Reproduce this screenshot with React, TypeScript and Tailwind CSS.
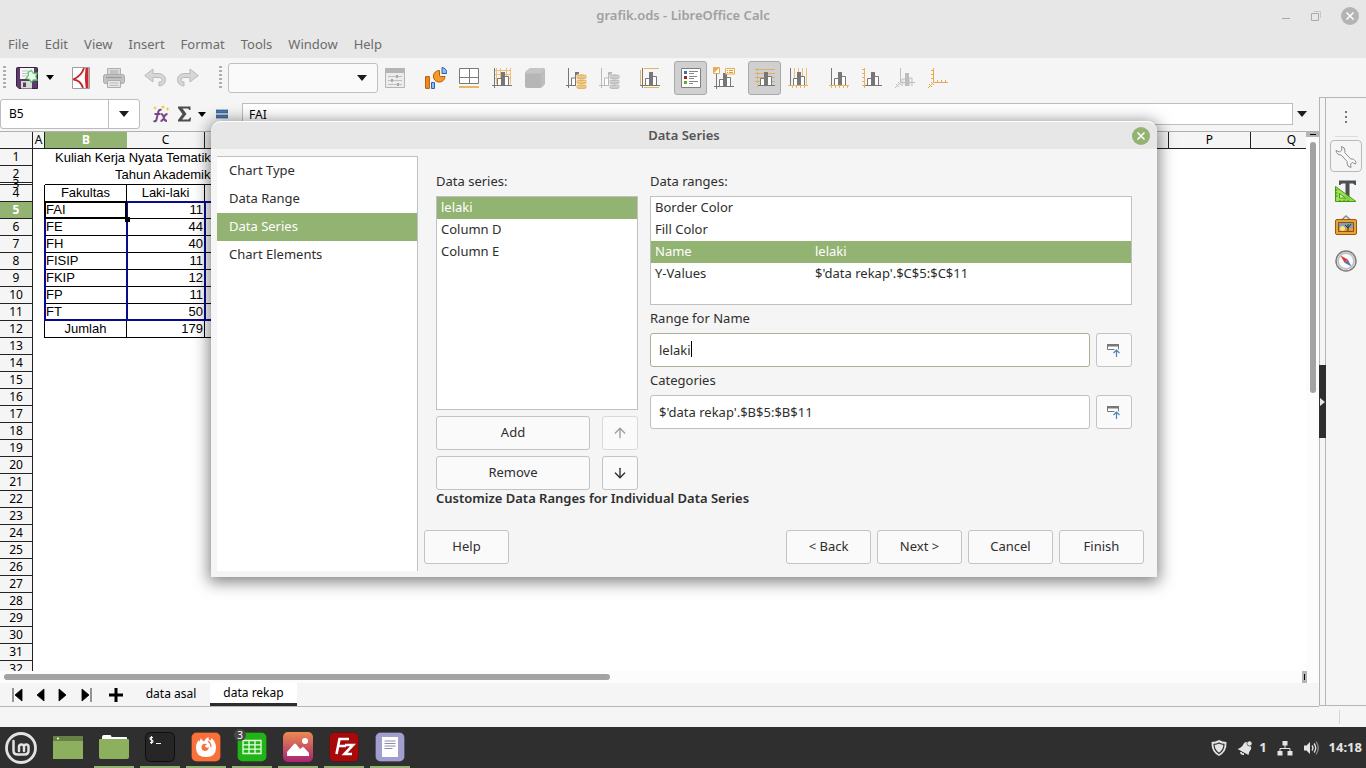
import { ReactNode } from 'react';
import { clsx } from 'clsx';
import { ArrowDown, ArrowUp } from 'lucide-react';

const uiFont = "font-['Noto_Sans',sans-serif]";

const menus = ['File', 'Edit', 'View', 'Insert', 'Format', 'Tools', 'Window', 'Help'];

const faculties = [
  { name: 'FAI', male: 11 },
  { name: 'FE', male: 44 },
  { name: 'FH', male: 40 },
  { name: 'FISIP', male: 11 },
  { name: 'FKIP', male: 12 },
  { name: 'FP', male: 11 },
  { name: 'FT', male: 50 },
];

const farColumns = ['D', 'E', 'F', 'G', 'H', 'I', 'J', 'K', 'L', 'M', 'N', 'O', 'P', 'Q'];

const steps = ['Chart Type', 'Data Range', 'Data Series', 'Chart Elements'];

const series = ['lelaki', 'Column D', 'Column E'];

const ranges = [
  { label: 'Border Color', value: '' },
  { label: 'Fill Color', value: '' },
  { label: 'Name', value: 'lelaki' },
  { label: 'Y-Values', value: "$'data rekap'.$C$5:$C$11" },
];

/* ---------- icons ---------- */

function Svg({ size = 20, className, children }: { size?: number; className?: string; children: ReactNode }) {
  return (
    <svg width={size} height={size} viewBox={`0 0 ${size} ${size}`} fill="none" className={className} aria-hidden="true">
      {children}
    </svg>
  );
}

function Caret({ className }: { className?: string }) {
  return (
    <svg width="10" height="6" viewBox="0 0 10 6" className={className} aria-hidden="true">
      <path d="M0 0h10L5 6z" fill="#1c1c1c" />
    </svg>
  );
}

function SmallCaret() {
  return (
    <svg width="8" height="5" viewBox="0 0 8 5" aria-hidden="true">
      <path d="M0 0h8L4 5z" fill="#000" />
    </svg>
  );
}

function Bars({ color = '#777', axis = true }: { color?: string; axis?: boolean }) {
  return (
    <>
      <path d="M5.500 17v-6.500h4V17" fill="#fff" stroke={color} />
      <path d="M12.500 17V8.500h4V17" fill="#fff" stroke={color} />
      <path d="M9 4h4v13H9z" fill={color} />
      {axis && <path d="M2.500 0v20M0 17.500h20" stroke={color} />}
    </>
  );
}

function SaveIcon() {
  return (
    <Svg size={22}>
      <path d="M.500 1.500q0-1 1-1h19q1 0 1 1v20H3l-2.500-2.500z" fill="#5d3a6b" stroke="#3c1f48" />
      <path d="M4 1h14v11H4z" fill="#f5f5f5" />
      <path d="M6 4h10M6 6.500h10M6 9h8" stroke="#c4c4c4" />
      <path d="M5 14h11v7.500H5z" fill="#d9d9d9" />
      <path d="M7 15.500h3v4.500H7z" fill="#4b4b4b" />
      <path d="m15.500 3.500 2 3 3.500-.2-1.200 3.200L21 13l-3.600-.2-2.200 2.400-1.700-3-3.400-.8 2.200-2.600-.2-3.400z" fill="#f2fff2" stroke="#55cf6a" strokeWidth="1.300" />
    </Svg>
  );
}

function PdfIcon() {
  return (
    <Svg size={22}>
      <path d="M2.500.500h17v21h-17z" fill="#fff" stroke="#9d9d9d" />
      <path d="M14 1C12.500 6 9 10 3 12.500M3.500 12.500C8 13 11.500 16 13 21" stroke="#c1272d" strokeWidth="1.800" />
      <path d="M15.500 1h3v20h-2.800q-1.700-10-.2-20z" fill="#c8282e" />
    </Svg>
  );
}

function PrintIcon() {
  return (
    <Svg size={22}>
      <path d="M4.500 1.500h13v7h-13z" fill="#dadada" stroke="#b0b0b0" />
      <path d="M7 4h8M7 6h8" stroke="#aaa" />
      <rect x=".5" y="7.500" width="21" height="9" rx="2" fill="#c3c3c3" stroke="#a9a9a9" />
      <path d="M3 10.500h16" stroke="#9c9c9c" strokeWidth="1.500" />
      <path d="M4.500 13.500h13v7h-13z" fill="#e6e6e6" stroke="#adadad" />
      <path d="M6.500 16h9M6.500 18.500h9" stroke="#bcbcbc" />
    </Svg>
  );
}

function UndoIcon({ flip }: { flip?: boolean }) {
  return (
    <Svg size={22} className={clsx(flip && '-scale-x-100')}>
      <path d="M9 2v4.500h5c4.500 0 7.500 2.500 7.500 6s-2.500 6-6.500 6.500v-4c1.800 0 3-.8 3-2.200 0-1.600-1.500-2.300-4-2.300H9V15L.700 8.500z" fill="#d6d6d6" stroke="#b9b9b9" />
    </Svg>
  );
}

function FormatIcon() {
  return (
    <Svg>
      <path d="M.500.500h19v19H.500z" fill="#ececec" stroke="#b5b5b5" />
      <path d="M1 1h18v4H1z" fill="#b5b5b5" />
      <path d="M3 8.500h14M3 12.500h14M3 16.500h14" stroke="#c0c0c0" />
      <path d="M11 7h2v3h-2zM6 11h2v3H6zM12 15h2v3h-2z" fill="#a9a9a9" />
    </Svg>
  );
}

function ChartTypeIcon() {
  return (
    <Svg size={22}>
      <path d="M.600 9.600h3.800v11.800H.600z" fill="#f08c1e" stroke="#b85c00" />
      <path d="M6.500 15.500h3v6h-3z" fill="#8fbdf0" stroke="#2b62ab" />
      <path d="M14.500 3.500A5.800 5.800 0 1 0 20 9.500h-4.500q-1 0-1-1z" fill="#f39a2e" stroke="#b85c00" />
      <path d="M17 .500v6h4.800C22 3 20 .800 17 .500z" fill="#8fbdf0" stroke="#2b62ab" />
    </Svg>
  );
}

function AreaIcon() {
  return (
    <Svg>
      <path d="M.500.500h19v15H.500zM10.500.500v15M.500 9.500h19" fill="#fff" stroke="#7a7a7a" />
      <path d="M0 19h20" stroke="#e8b75f" strokeWidth="2" />
    </Svg>
  );
}

function WallIcon() {
  return (
    <Svg>
      <path d="M3 2.500h16M3 6.500h16M3 10.500h16M4.500 0v16M8.500 0v16M14.500 0v16M18.500 0v16" stroke="#ecc078" />
      <Bars />
    </Svg>
  );
}

function CubeIcon() {
  return (
    <Svg>
      <path d="M0 6q0-2 1.500-3.200L4 1q1-1 2.500-1H18q2 0 2 2v12.500q0 1.500-1 2.500l-1.500 1.500Q16 20 14.500 20H2q-2 0-2-2z" fill="#b6b6b6" />
      <path d="M0 6q0-2 1.500-3.200L4 1q1-1 2.500-1H18q1.500 0 2 1.500L16 5.500H0z" fill="#c6c6c6" />
      <path d="M16 5.500 20 1.500v13q0 1.500-1 2.500l-3 2.800z" fill="#bdbdbd" />
    </Svg>
  );
}

function DataIcon({ muted }: { muted?: boolean }) {
  const bar = muted ? '#b9b9b9' : '#777';
  const disc = muted ? '#bdbdbd' : '#e6b45c';
  return (
    <Svg size={22}>
      <path d="M3.500 1v20M1 18.500h10" stroke={bar} />
      <path d="M6.500 18v-7h4v7" fill="#fff" stroke={bar} />
      <path d="M10 5h4v3h-3v10h-1z" fill={bar} />
      {[17, 12, 7].map((y) => (
        <g key={y}>
          <path d={`M11.500 ${y + 1.5}v2q0 1.500 5 1.500t5-1.500v-2z`} fill={disc} />
          <ellipse cx="16.500" cy={y + 1.5} rx="5" ry="1.500" fill={disc} stroke="#f5f5f5" strokeWidth=".6" />
        </g>
      ))}
    </Svg>
  );
}

function TitlesIcon() {
  return (
    <Svg>
      <path d="M.500 2v15M4 .500h15M4 19.500h15" stroke="#e6b45c" />
      <Bars />
    </Svg>
  );
}

function LegendIcon() {
  return (
    <Svg>
      <path d="M.500.500h19v19H.500z" fill="#fff" stroke="#7f7f7f" />
      <path d="M3 3h3v3H3z" fill="#3f6ea8" />
      <path d="M3 8h3v3H3z" fill="#a52222" />
      <path d="M3 13h3v3H3z" fill="#5fae2b" />
      <path d="M8 3.500h9M8 5.500h5M8 8.500h8M8 10.500h5M8 13.500h9M8 15.500h4" stroke="#888" />
    </Svg>
  );
}

function LabelsIcon() {
  return (
    <Svg size={22}>
      <g transform="translate(1 2)">
        <Bars />
      </g>
      <path d="M.500.500h6v6h-6z" fill="#fff" stroke="#e3ae55" />
      <path d="M.500 6.500v-6h6z" fill="#e3ae55" />
      <path d="M12.500 1.500h9v5.500h-9z" fill="#fff6e2" stroke="#e3ae55" />
      <path d="M14 3.500h1m1 0h4M14 5.500h1m1 0h4" stroke="#d39d42" />
    </Svg>
  );
}

function HGridIcon() {
  return (
    <Svg>
      <path d="M0 1.500h20M0 5.500h20M0 9.500h20M0 13.500h20" stroke="#dcb06a" />
      <path d="M2.500 0v20" stroke="#dcb06a" strokeDasharray="1 1" />
      <Bars axis={false} />
      <path d="M3 17.500h17" stroke="#777" />
    </Svg>
  );
}

function VGridIcon() {
  return (
    <Svg>
      <path d="M6.500 0v17M10.500 0v17M14.500 0v17M18.500 0v17" stroke="#ecc078" />
      <Bars axis={false} />
      <path d="M2.500 0v18" stroke="#777" />
      <path d="M0 17.500h20M4.500 17v3M8.500 17v3M12.500 17v3M16.500 17v3" stroke="#e6b45c" />
    </Svg>
  );
}

function XAxisIcon() {
  return (
    <Svg>
      <Bars axis={false} />
      <path d="M2.500 0v18" stroke="#777" />
      <path d="M0 17.500h20M2.500 17v3M6.500 17v3M10.500 17v3M14.500 17v3M18.500 17v3" stroke="#e6b45c" />
    </Svg>
  );
}

function YAxisIcon() {
  return (
    <Svg>
      <Bars axis={false} />
      <path d="M3 17.500h17" stroke="#777" />
      <path d="M2.500 0v20M0 1.500h3M0 5.500h3M0 9.500h3M0 13.500h3M0 17.500h3" stroke="#e6b45c" />
    </Svg>
  );
}

function ZAxisIcon() {
  return (
    <Svg>
      <path d="M7 18v-7h4v7M14 18v-8h3v8" fill="#eee" stroke="#c0c0c0" />
      <path d="M10 5h4v13h-4z" fill="#bdbdbd" />
      <path d="M5.500 0v14.500H20M5.500 14.500 0 20M1 16l3 3M3 14l3 3" stroke="#bdbdbd" />
    </Svg>
  );
}

function AllAxesIcon() {
  return (
    <Svg>
      <path d="M5.500 0v14.500H20M5.500 14.500 0 20M3 2.500h3M3 6.500h3M3 10.500h3M9.500 12v3M13.500 12v3M17.500 12v3M1 16l3 3M3 14l3 3" stroke="#eaa653" />
    </Svg>
  );
}

function FunctionIcon() {
  return (
    <Svg size={18}>
      <path d="M9.500 5C7.500 4 6.500 5.500 6 8l-1.500 6.500Q4 17 1.500 16M2.500 9h6" stroke="#7a4687" strokeWidth="2" />
      <path d="M9 9q2 0 2.700 3.500T15 16M15.500 9Q13 9 12 12.500T8.500 16" stroke="#7a4687" strokeWidth="1.800" />
      <path d="m3 1 .7 1.500L5 3l-1.300.5L3 5l-.7-1.500L1 3l1.300-.5zM11 0l.7 1.300 1.300.7-1.300.7L11 4l-.7-1.300L9 2l1.300-.7zM15.500 2l.6 1.300 1.400.7-1.400.6-.6 1.400-.6-1.400-1.400-.6 1.400-.7z" fill="#ecc62f" />
    </Svg>
  );
}

function SumIcon() {
  return (
    <Svg size={16}>
      <path d="M1 .500h12.500V4h-1.300Q12 2.500 10.500 2.500H5.500L9.500 8l-4.500 5.500h6q1.500 0 1.800-2H14l-.5 4H1V14l4.500-6L1 2z" fill="#4d4d4d" />
    </Svg>
  );
}

function RangeIcon() {
  return (
    <Svg size={14}>
      <path d="M.500 1.500h11v5h-11z" fill="#fff" stroke="#777" />
      <path d="M0 1h12v2.500H0z" fill="#777" />
      <path d="M9.500 14V6.500M6 10l3.500-3.500L13 10" stroke="#f9f9f9" strokeWidth="3" />
      <path d="M9.500 14V7M6.500 10l3-3 3 3" stroke="#4f81bd" strokeWidth="1.200" />
    </Svg>
  );
}

function WrenchIcon() {
  return (
    <Svg size={24}>
      <path d="M2 6.500 5.500 8 8 6 7.500 2.500Q11 3 11 7l-.3 1.500 6 6.500q4-.5 5.300 3.500l-.5 1.500-3-1.500-2 1.500.5 3.500q-4-.5-4-4.500l.2-1.500-6-6.500Q2.500 11 2 6.500z" fill="#f7f7f7" stroke="#8f8f8f" />
    </Svg>
  );
}

function StylesIcon() {
  return (
    <Svg size={24}>
      <path d="M5 1.500h17V6h-1.500q0-1.500-2-1.500h-3V18q0 2 2 2v1.500h-8V20q2 0 2-2V4.500h-3q-2 0-2 1.500H5z" fill="#4c5052" />
      <path d="M1.500 7.500 22 22.500H1.500z" fill="#8ee04b" fillOpacity=".9" stroke="#4e9a06" />
      <path d="M5.500 14.500 11.500 19h-6z" fill="#e6f7d8" stroke="#4e9a06" />
      <path d="M1.500 11h2M1.500 14h2M1.500 17h2M6 22.500v-1.500M10 22.500v-1.500M14 22.500v-1.500" stroke="#3f7f05" />
    </Svg>
  );
}

function GalleryIcon() {
  return (
    <Svg size={24}>
      <path d="M8 5.500 12 2l4 3.500" stroke="#8a8a8a" strokeWidth="1.500" />
      <rect x="1.500" y="5.500" width="21" height="15" rx="1.500" fill="#e8a33a" stroke="#9a5a08" />
      <path d="M4.500 8.500h15v9h-15z" fill="#7ea0b8" stroke="#8b5209" />
      <path d="M5 14h14v3H5z" fill="#e29a3b" />
      <circle cx="8.500" cy="14.500" r="2.500" fill="#ffe27a" />
      <path d="M14 17v-3l-3-3m3 3 3-4m-3 4v-4" stroke="#3d3226" />
    </Svg>
  );
}

function CompassIcon() {
  return (
    <Svg size={24}>
      <circle cx="12" cy="12" r="10" fill="#fafafa" stroke="#7d7d7d" strokeWidth="1.500" />
      <circle cx="12" cy="12" r="8" stroke="#c2c2c2" strokeWidth="1.800" />
      <path d="m6.500 6.500 7.300 4-3.300 3.300z" fill="#df3a3a" />
      <path d="m17.500 17.500-7-3.700 3.300-3.300z" fill="#5577a8" />
    </Svg>
  );
}

/* ---------- window chrome ---------- */

function TitleBar() {
  return (
    <header className="relative flex h-[31px] items-center justify-center text-[13px] font-semibold text-[#a0a0a0]">
      <h1>grafik.ods - LibreOffice Calc</h1>
      <div className="absolute right-[7px] flex items-center gap-[19px]">
        <button aria-label="Minimize">
          <Svg size={10}>
            <path d="M1 7.500h8" stroke="#aaa" />
          </Svg>
        </button>
        <button aria-label="Restore">
          <Svg size={12}>
            <path d="M1.500 3.500h7v7h-7z" stroke="#aaa" />
            <path d="M4 1.500h6.500V8" stroke="#c6c6c6" />
          </Svg>
        </button>
        <button aria-label="Close" className="flex size-[18px] items-center justify-center rounded-full bg-[#b4b4b4]">
          <Svg size={10}>
            <path d="m1.500 1.500 7 7m0-7-7 7" stroke="#fff" strokeWidth="1.500" />
          </Svg>
        </button>
      </div>
    </header>
  );
}

function MenuBar() {
  return (
    <nav className="flex h-[27px] items-center gap-4 px-2 text-[13px] text-[#6c6c6c]">
      {menus.map((menu) => (
        <button key={menu}>{menu}</button>
      ))}
    </nav>
  );
}

function Tool({ label, active, children }: { label: string; active?: boolean; children: ReactNode }) {
  return (
    <button
      aria-label={label}
      className={clsx(
        'flex h-[34px] w-[33px] items-center justify-center',
        active && 'rounded-[3px] border border-[#a9a9a9] bg-[#d0d0d0]'
      )}
    >
      {children}
    </button>
  );
}

function Grip() {
  return (
    <svg width="3" height="24" aria-hidden="true">
      <path d="M1.500 0v24" stroke="#aeaeae" strokeWidth="3" strokeDasharray="2 2" />
    </svg>
  );
}

function Toolbar() {
  return (
    <div className="flex h-[39px] shrink-0 items-center gap-2 bg-[#f5f5f5] px-[3px]">
      <div className="flex items-center">
        <Grip />
        <div className="ml-1 flex items-center">
          <Tool label="Save">
            <SaveIcon />
          </Tool>
          <button aria-label="Save options" className="flex w-[13px] justify-center">
            <SmallCaret />
          </button>
        </div>
      </div>
      <div className="flex">
        <Tool label="Export as PDF"><PdfIcon /></Tool>
        <Tool label="Print"><PrintIcon /></Tool>
      </div>
      <div className="flex">
        <Tool label="Undo"><UndoIcon /></Tool>
        <Tool label="Redo"><UndoIcon flip /></Tool>
      </div>
      <div className="ml-[7px] flex items-center">
        <Grip />
        <div className="relative ml-1.5">
          <select aria-label="Chart element" className="h-[30px] w-[150px] appearance-none rounded-[3px] border border-[#c0c0c0] bg-[#fafafa]">
            <option></option>
          </select>
          <Caret className="pointer-events-none absolute top-3 right-[11px]" />
        </div>
        <Tool label="Format Selection"><FormatIcon /></Tool>
      </div>
      <div className="flex">
        <Tool label="Chart Type"><ChartTypeIcon /></Tool>
        <Tool label="Chart Area"><AreaIcon /></Tool>
        <Tool label="Chart Wall"><WallIcon /></Tool>
        <Tool label="3D View"><CubeIcon /></Tool>
      </div>
      <div className="flex">
        <Tool label="Data Ranges"><DataIcon /></Tool>
        <Tool label="Data Table"><DataIcon muted /></Tool>
      </div>
      <Tool label="Titles"><TitlesIcon /></Tool>
      <div className="flex">
        <Tool label="Legend On/Off" active><LegendIcon /></Tool>
        <Tool label="Legend"><LabelsIcon /></Tool>
      </div>
      <div className="flex">
        <Tool label="Horizontal Grids" active><HGridIcon /></Tool>
        <Tool label="Vertical Grids"><VGridIcon /></Tool>
      </div>
      <div className="flex">
        <Tool label="X Axis"><XAxisIcon /></Tool>
        <Tool label="Y Axis"><YAxisIcon /></Tool>
        <Tool label="Z Axis"><ZAxisIcon /></Tool>
        <Tool label="All Axes"><AllAxesIcon /></Tool>
      </div>
    </div>
  );
}

function FormulaBar() {
  return (
    <div className="flex h-[35px] shrink-0 items-center border-b border-[#b0b0b0] text-xs text-black">
      <div className="flex h-[30px] w-[140px] rounded-[3px] border border-[#bdbdbd] bg-white">
        <input aria-label="Name Box" defaultValue="B5" className="w-[108px] border-r border-[#bdbdbd] pl-2 outline-none" />
        <button aria-label="Cell names" className="flex flex-1 items-center justify-center">
          <Caret />
        </button>
      </div>
      <button aria-label="Function Wizard" className="ml-3">
        <FunctionIcon />
      </button>
      <button aria-label="Select Function" className="ml-[7px] flex items-center gap-[5px]">
        <SumIcon />
        <SmallCaret />
      </button>
      <button aria-label="Formula" className="ml-2.5">
        <Svg size={12}>
          <path d="M0 2h12v3H0zM0 7h12v3H0z" fill="#4a78ae" stroke="#2d5688" strokeWidth=".7" />
        </Svg>
      </button>
      <input aria-label="Formula input" defaultValue="FAI" className="ml-3.5 h-[22px] min-w-0 flex-1 border border-[#bdbdbd] bg-white px-1.5 outline-none" />
      <button aria-label="Expand Formula Bar" className="mx-1 mr-3">
        <Caret />
      </button>
    </div>
  );
}

/* ---------- sheet ---------- */

const headCell = 'border-r border-b border-[#222] bg-[#f5f5f5] p-0 text-center font-normal';
const gridCell = 'border-r border-b border-black p-0';

function RowHead({ n, active }: { n: number; active?: boolean }) {
  return (
    <th
      scope="row"
      className={clsx(
        "border-r border-b border-[#222] p-0 text-center font-['Noto_Sans',sans-serif] text-xs leading-4",
        active ? 'bg-[#92b372] font-bold text-white' : 'bg-[#f5f5f5] font-normal'
      )}
    >
      {n}
    </th>
  );
}

function Sheet() {
  return (
    <div className="min-h-0 min-w-0 flex-1 overflow-hidden bg-white">
      <table className="w-[1333px] table-fixed border-separate border-spacing-0 font-['Liberation_Sans',Arial,sans-serif] text-[13px] leading-4 text-black">
        <colgroup>
          <col className="w-[33px]" />
          <col className="w-3" />
          <col className="w-[82px]" />
          <col className="w-[78px]" />
          <col className="w-[84px]" />
          {farColumns.slice(1, 12).map((c) => (
            <col key={c} className="w-20" />
          ))}
          <col className="w-[82px]" />
          <col className="w-[82px]" />
        </colgroup>
        <thead className="font-['Noto_Sans',sans-serif] text-xs leading-4">
          <tr className="h-[17px]">
            <th className={headCell} aria-label="Select all"></th>
            <th className={headCell}>A</th>
            <th className="border-b border-[#222] bg-[#92b372] p-0 text-center font-bold text-white">B</th>
            <th className={headCell}>C</th>
            {farColumns.map((c) => (
              <th key={c} className={headCell}>{c}</th>
            ))}
          </tr>
        </thead>
        <tbody>
          <tr className="h-[17px]">
            <RowHead n={1} />
            <td></td>
            <td colSpan={5} className="p-0 pl-2.5 whitespace-nowrap">Kuliah Kerja Nyata Tematik</td>
          </tr>
          <tr className="h-[17px]">
            <RowHead n={2} />
            <td></td>
            <td colSpan={5} className="p-0 pl-[70px] whitespace-nowrap">Tahun Akademik</td>
          </tr>
          {/* row 3 is collapsed to a sliver, its number spills over the neighbours */}
          <tr>
            <th scope="row" className="border-r border-b border-[#222] p-0 font-['Noto_Sans',sans-serif] text-xs font-normal">
              <div className="flex h-px items-center justify-center">3</div>
            </th>
            <td className="p-0"></td>
            <td className="border-b border-black p-0"></td>
            <td className="border-b border-black p-0"></td>
            <td className="border-b border-black p-0"></td>
          </tr>
          <tr className="h-[17px]">
            <RowHead n={4} />
            <td className="border-r border-black p-0"></td>
            <td className={clsx(gridCell, 'text-center')}>Fakultas</td>
            <td className={clsx(gridCell, 'text-center')}>Laki-laki</td>
            <td className={gridCell}></td>
          </tr>
          {faculties.map((f, i) => (
            <tr key={f.name} className="h-[17px]">
              <RowHead n={i + 5} active={i === 0} />
              <td className="border-r border-black p-0"></td>
              <td className={clsx(gridCell, 'pl-px', i === 0 && 'relative')}>
                {f.name}
                {i === 0 && (
                  <>
                    {/* source ranges outlined in blue, seven rows high */}
                    <span className="absolute -top-px -left-px h-[120px] w-[84px] border-2 border-[#0a0a8c]" />
                    <span className="absolute -top-px left-[81px] h-[120px] w-[80px] border-2 border-[#0a0a8c]" />
                    <span className="absolute -top-px left-[159px] h-[120px] w-[84px] border-2 border-[#0a0a8c]" />
                    <span className="absolute -inset-px border-2 border-black" />
                    <span className="absolute -right-1 -bottom-1 size-[5px] bg-black" />
                  </>
                )}
              </td>
              <td className={clsx(gridCell, 'pr-px text-right')}>{f.male}</td>
              <td className={gridCell}></td>
            </tr>
          ))}
          <tr className="h-[17px]">
            <RowHead n={12} />
            <td className="border-r border-black p-0"></td>
            <td className={clsx(gridCell, 'text-center')}>Jumlah</td>
            <td className={clsx(gridCell, 'pr-px text-right')}>179</td>
            <td className={gridCell}></td>
          </tr>
          {Array.from({ length: 20 }, (_, i) => (
            <tr key={i} className="h-[17px]">
              <RowHead n={i + 13} />
            </tr>
          ))}
        </tbody>
      </table>
    </div>
  );
}

function VerticalScroll() {
  return (
    <div className="flex w-[13px] shrink-0 flex-col items-center bg-[#fcfcfc]">
      <div className="flex h-[5px] w-full items-center justify-center bg-[#b5b5b5]">
        <div className="h-px w-[6px] bg-black" />
      </div>
      <div className="mt-[5px] h-[251px] w-[6px] rounded-full bg-[#a3a3a3]" />
    </div>
  );
}

function SheetTabs() {
  const nav = [
    { label: 'First sheet', d: 'M1 0v14M10 1v12L3 7z' },
    { label: 'Previous sheet', d: 'M9 1v12L2 7z' },
    { label: 'Next sheet', d: 'M1 1v12l7-6z' },
    { label: 'Last sheet', d: 'M1 1v12l7-6zM10 0v14' },
  ];
  return (
    <div className="flex h-6 shrink-0 border-b border-[#b5b5b5] text-xs text-black">
      <div className="flex items-center gap-3 pr-2 pl-3">
        {nav.map((n) => (
          <button key={n.label} aria-label={n.label}>
            <svg width="11" height="14" viewBox="0 0 11 14" aria-hidden="true">
              <path d={n.d} fill="#000" stroke="#000" strokeWidth=".8" />
            </svg>
          </button>
        ))}
        <button aria-label="Add sheet" className="ml-1">
          <Svg size={16}>
            <path d="M8 1v14M1 8h14" stroke="#000" strokeWidth="3" />
          </Svg>
        </button>
      </div>
      <div role="tablist" className="flex">
        <button role="tab" className="w-[78px] pb-px">data asal</button>
        <button role="tab" aria-selected="true" className="w-[87px] border-b-[3px] border-[#2c2c2c] bg-white">
          data rekap
        </button>
      </div>
    </div>
  );
}

function SideBar() {
  const decks = [
    { label: 'Properties', icon: <WrenchIcon /> },
    { label: 'Styles', icon: <StylesIcon /> },
    { label: 'Gallery', icon: <GalleryIcon /> },
    { label: 'Navigator', icon: <CompassIcon /> },
  ];
  return (
    <aside className="mb-px flex w-[47px] shrink-0 border-y border-l border-[#b5b5b5]">
      <div className="relative w-[6px] border-r border-[#b5b5b5]">
        <button aria-label="Hide sidebar" className="absolute top-[267px] -left-px flex h-[73px] w-[7px] items-center bg-[#2e2e2e]">
          <svg width="7" height="8" viewBox="0 0 7 8" aria-hidden="true">
            <path d="m1 0 5 4-5 4z" fill="#e6e6e6" />
          </svg>
        </button>
      </div>
      <div className="flex flex-1 flex-col items-center">
        <button aria-label="Sidebar settings" className="flex h-[38px] w-full items-center justify-center border-[#ddd]">
          <Svg size={14}>
            <path d="M6 1h2v2H6zM6 6h2v2H6zM6 11h2v2H6z" fill="#777" />
          </Svg>
        </button>
        <div className="h-px w-[23px] bg-[#dcdcdc]" />
        <div className="mt-[3px] flex flex-col gap-[3px]">
          {decks.map((d, i) => (
            <button
              key={d.label}
              aria-label={d.label}
              className={clsx('flex size-8 items-center justify-center', i === 0 && 'rounded-[4px] border border-[#b8b8b8]')}
            >
              {d.icon}
            </button>
          ))}
        </div>
      </div>
    </aside>
  );
}

/* ---------- dialog ---------- */

function DialogButton({ className, children, ...rest }: { className?: string; children: ReactNode; 'aria-label'?: string; disabled?: boolean }) {
  return (
    <button
      className={clsx('flex h-[34px] items-center justify-center rounded-[3px] border border-[#c3c3c3] bg-[#fafafa] disabled:border-[#d9d9d9]', className)}
      {...rest}
    >
      {children}
    </button>
  );
}

function RangeField({ id, label, value, focused }: { id: string; label: string; value: string; focused?: boolean }) {
  return (
    <div>
      <label htmlFor={id} className="flex h-7 items-center">{label}</label>
      <div className="flex gap-1.5">
        <div className="relative flex-1">
          <input
            id={id}
            defaultValue={value}
            className={clsx('h-[34px] w-full rounded-[3px] border bg-white px-2 outline-none', focused ? 'border-[#aab096]' : 'border-[#c0c0c0]')}
          />
          {focused && <span className="absolute top-2 left-[41px] h-4 w-px bg-black" />}
        </div>
        <DialogButton className="w-9" aria-label={`Select range: ${label}`}>
          <RangeIcon />
        </DialogButton>
      </div>
    </div>
  );
}

function DataSeriesDialog() {
  return (
    <section
      role="dialog"
      aria-labelledby="dialog-title"
      className="absolute top-[121px] right-[209px] left-[211px] rounded-t-[10px] bg-[#f5f5f5] text-[13px] text-[#2e2e2e] shadow-[0_3px_16px_2px_rgba(0,0,0,0.5)]"
    >
      <div className="relative flex h-[28px] items-center justify-center rounded-t-[10px] border-t border-white bg-[#e7e7e7]">
        <h2 id="dialog-title" className="font-semibold text-[#555]">Data Series</h2>
        <button aria-label="Close dialog" className="absolute right-[7px] flex size-[18px] items-center justify-center rounded-full bg-[#92b372]">
          <Svg size={10}>
            <path d="m1.500 1.500 7 7m0-7-7 7" stroke="#fff" strokeWidth="1.500" />
          </Svg>
        </button>
      </div>
      <div className="flex pt-[7px] pr-[7px] pb-[6px] pl-1.5">
        <ul className="w-[201px] shrink-0 border-t border-r border-[#c0c0c0] bg-white">
          {steps.map((step) => (
            <li key={step}>
              <button className={clsx('h-7 w-full px-3 text-left', step === 'Data Series' && 'bg-[#92b372] text-white')}>{step}</button>
            </li>
          ))}
        </ul>
        <div className="flex flex-1 flex-col px-1.5 pt-3 pb-[7px]">
          <div className="flex gap-3 px-3">
            <div className="w-[202px] shrink-0">
              <div id="series-label" className="flex h-7 items-center">Data series:</div>
              <ul role="listbox" aria-labelledby="series-label" className="h-[214px] border border-[#c0c0c0] bg-white">
                {series.map((s, i) => (
                  <li key={s} role="option" aria-selected={i === 0} className={clsx('flex h-[22px] items-center px-1', i === 0 && 'bg-[#92b372] text-white')}>
                    {s}
                  </li>
                ))}
              </ul>
              <div className="mt-1.5 grid grid-cols-[154px_36px] justify-between gap-y-1.5">
                <DialogButton>Add</DialogButton>
                <DialogButton aria-label="Move up" disabled>
                  <ArrowUp size={16} className="text-[#9c9c9c]" />
                </DialogButton>
                <DialogButton>Remove</DialogButton>
                <DialogButton aria-label="Move down">
                  <ArrowDown size={16} />
                </DialogButton>
              </div>
            </div>
            <div className="flex-1">
              <div className="flex h-7 items-center">Data ranges:</div>
              <div className="h-[109px] border border-[#c0c0c0] bg-white">
                <table className="w-full table-fixed">
                  <tbody>
                    {ranges.map((r) => (
                      <tr key={r.label} className={clsx('h-[22px]', r.label === 'Name' && 'bg-[#92b372] text-white')}>
                        <td className="w-40 p-0 pl-1">{r.label}</td>
                        <td className="p-0 pl-1">{r.value}</td>
                      </tr>
                    ))}
                  </tbody>
                </table>
              </div>
              <RangeField id="range-name" label="Range for Name" value="lelaki" focused />
              <RangeField id="categories" label="Categories" value="$'data rekap'.$B$5:$B$11" />
            </div>
          </div>
          <h3 className="px-3 leading-4 font-semibold">Customize Data Ranges for Individual Data Series</h3>
          <div className="mt-6 flex gap-1.5">
            <DialogButton className="mr-auto w-[85px]">Help</DialogButton>
            <DialogButton className="w-[85px]">&lt; Back</DialogButton>
            <DialogButton className="w-[85px]">Next &gt;</DialogButton>
            <DialogButton className="w-[85px]">Cancel</DialogButton>
            <DialogButton className="w-[85px]">Finish</DialogButton>
          </div>
        </div>
      </div>
    </section>
  );
}

/* ---------- desktop panel ---------- */

function MintLogo() {
  return (
    <Svg size={32}>
      <circle cx="16" cy="16" r="14.500" fill="#303030" stroke="#e2e2e2" strokeWidth="2.800" />
      <path d="M8.500 9v9.500q0 4 4 4h7q4 0 4-4V15q0-2.500-2.300-2.500T19 15v4M19 15q0-2.500-2.500-2.500T14 15v4" stroke="#e2e2e2" strokeWidth="2.500" strokeLinecap="round" />
    </Svg>
  );
}

function Tile({ fill, children }: { fill: string; children: ReactNode }) {
  return (
    <Svg size={30}>
      <rect x=".5" y=".5" width="29" height="29" rx="5" fill={fill} stroke="#000" strokeOpacity=".15" />
      {children}
    </Svg>
  );
}

function Taskbar() {
  const apps = [
    {
      label: 'Show desktop',
      icon: (
        <Svg size={30}>
          <path d="M0 4h30v23H0z" fill="#8db05f" />
          <path d="M0 4h30v5H0z" fill="#678044" />
          <circle cx="5" cy="6.500" r="1" fill="#fff" />
        </Svg>
      ),
    },
    {
      label: 'Files',
      open: true,
      icon: (
        <Svg size={30}>
          <path d="M3 8V5q0-2 2-2h6q1.500 0 1.500 2H27q1 0 1 1v4H3z" fill="#fff" />
          <path d="M0 8q0-1 1-1h28q1 0 1 1v17q0 2-2 2H2q-2 0-2-2z" fill="#8db05f" />
        </Svg>
      ),
    },
    {
      label: 'Terminal',
      open: true,
      icon: (
        <Svg size={30}>
          <rect x=".5" y=".5" width="29" height="29" rx="5" fill="#262626" stroke="#0e0e0e" />
          <path d="M8 5.500Q5 5 5 6.500T6.500 8 8 9.500 5 10.500M6.500 4v8M11 11.500h5" stroke="#f2f2f2" strokeWidth="1.200" />
        </Svg>
      ),
    },
    {
      label: 'Firefox',
      open: true,
      icon: (
        <Tile fill="#f9713a">
          <path d="M10 6q.5 2.500 3 3.500Q14.500 6 17.500 5q-.5 2 1.500 3.500 1.500-.5 1.500-2.500 4.500 4 4.500 9.500Q25 25 15 25T5 15.500Q5 10.500 8 8l.5 2z" fill="#fff" />
          <path d="M11.500 12.500q2.500-1.500 4.500 0-2 .5-2 2 1.500 2 4 .5-1 4.500-5 3.800-3-1-2.500-4.300z" fill="#f9713a" />
          <path d="M17 9q3 2 3 6" stroke="#f9713a" strokeWidth="1.200" />
        </Tile>
      ),
    },
    {
      label: 'LibreOffice Calc',
      open: true,
      badge: '3',
      icon: (
        <Tile fill="#22b417">
          <path d="M6 8.500h18v13H6zM6 12.800h18M6 17.200h18M12 8.500v13M18 8.500v13" stroke="#e9ffe6" strokeWidth="1.300" />
        </Tile>
      ),
    },
    {
      label: 'Image viewer',
      open: true,
      icon: (
        <Svg size={30}>
          <defs>
            <linearGradient id="sunset" x1="0" y1="0" x2="0" y2="1">
              <stop offset="0" stopColor="#ec8a52" />
              <stop offset="1" stopColor="#a8246e" />
            </linearGradient>
          </defs>
          <rect width="30" height="30" rx="5" fill="url(#sunset)" />
          <circle cx="22" cy="9" r="3" fill="#fff" />
          <path d="M4 24v-4l7-8q1-1 2 0l4 5 2-1.500q1-.8 2 0l5 5.500v3z" fill="#fff" />
        </Svg>
      ),
    },
    {
      label: 'FileZilla',
      open: true,
      icon: (
        <Tile fill="#a80a0a">
          <path d="M7.500 22 10.500 7H20M9 14h8M16 13h8l-8.500 9H23" stroke="#fff" strokeWidth="2.600" />
        </Tile>
      ),
    },
    {
      label: 'Text editor',
      open: true,
      icon: (
        <Tile fill="#a09fd0">
          <path d="M7 5h16v20H7z" fill="#fff" />
          <path d="M9.500 9h11M9.500 11.500h11M9.500 14h11M9.500 16.500h8" stroke="#8b8baa" />
        </Tile>
      ),
    },
  ];

  return (
    <footer className="flex h-[41px] shrink-0 items-center bg-[#2f2f2f] pr-1 pl-[5px] text-white">
      <button aria-label="Menu">
        <MintLogo />
      </button>
      <div className="ml-[11px] flex h-full gap-1.5">
        {apps.map((app) => (
          <button
            key={app.label}
            aria-label={app.label}
            className={clsx('relative flex w-10 items-center justify-center border-b-2', app.open ? 'border-[#92b372]' : 'border-transparent')}
          >
            {app.icon}
            {app.badge && (
              <span className="absolute top-0.5 left-0.5 flex size-3 items-center justify-center rounded-full bg-[#484848] text-[10px] leading-none">
                {app.badge}
              </span>
            )}
          </button>
        ))}
      </div>
      <div className="ml-auto flex items-center gap-2.5 text-[13px] font-bold text-[#e4e4e4]">
        <Svg size={16}>
          <path d="M8 0q3.500 2 7.500 2Q16 12 8 16 0 12 .500 2 4.500 2 8 0z" fill="#e4e4e4" />
          <path d="M8 3q2.500 1.300 5 1.300Q13 10.500 8 13.500 3 10.500 3 4.300 5.500 4.300 8 3z" stroke="#2f2f2f" strokeWidth="1.200" />
        </Svg>
        <span className="flex items-center gap-1.5">
          <Svg size={16}>
            <path d="M.500 9Q5 7.500 6.500 4q1-2.500 4-2 0 4 3.500 4.500.8 2-.5 3.500-2 2-2 5z" fill="#e4e4e4" />
            <circle cx="12.500" cy="3.500" r="2.500" fill="#e4e4e4" stroke="#2f2f2f" strokeWidth=".6" />
            <path d="M4 12q0 2.500 3 2" stroke="#e4e4e4" strokeWidth="1.800" />
          </Svg>
          1
        </span>
        <Svg size={16}>
          <path d="M5.500 1h5v4.500h-5zM.500 11h5v4.500h-5zM10.500 11h5v4.500h-5z" fill="#e4e4e4" />
          <path d="M8 5v3.500M3 11V8.500h10V11" stroke="#e4e4e4" />
        </Svg>
        <Svg size={16}>
          <path d="M1 5.500h2.500L7 2v12l-3.500-3.500H1z" fill="#e4e4e4" />
          <path d="M9 5.500q2 2.500 0 5M11 3.500q3.500 4.500 0 9" stroke="#e4e4e4" strokeWidth="1.300" />
          <path d="M13 1.500q4.500 6.500 0 13" stroke="#8a8a8a" strokeWidth="1.300" />
        </Svg>
        <time>14:18</time>
      </div>
    </footer>
  );
}

export default function App() {
  return (
    <div className={clsx('relative flex h-screen flex-col overflow-hidden bg-[#f5f5f5]', uiFont)}>
      <div className="shrink-0 bg-[#e7e7e7]">
        <TitleBar />
        <MenuBar />
      </div>
      <Toolbar />
      <div className="flex min-h-0 flex-1">
        <main className="flex min-w-0 flex-1 flex-col">
          <FormulaBar />
          <div className="flex min-h-0 flex-1">
            <Sheet />
            <VerticalScroll />
          </div>
          <div className="flex h-3 shrink-0 items-center bg-[#fcfcfc] pl-1">
            <div className="h-[6px] w-[606px] rounded-full bg-[#a3a3a3]" />
            <div className="mr-3 ml-auto flex h-3 w-[5px] items-center justify-center bg-[#b5b5b5]">
              <div className="h-[6px] w-px bg-black" />
            </div>
          </div>
          <SheetTabs />
        </main>
        <SideBar />
      </div>
      <div className="flex h-5 shrink-0 justify-end py-[3px]">
        <div className="w-[27px] border-l border-[#d5d5d5]" />
      </div>
      <Taskbar />
      <DataSeriesDialog />
    </div>
  );
}
